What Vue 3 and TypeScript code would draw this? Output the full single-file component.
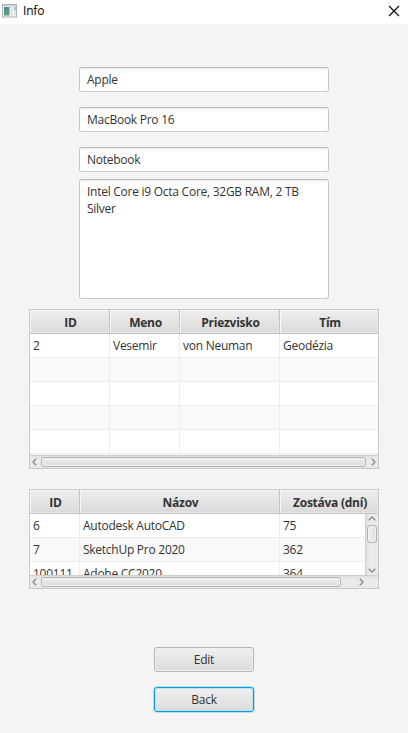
<script setup lang="ts">
const fields: string[] = ['Apple', 'MacBook Pro 16', 'Notebook']
const people: string[] = ['ID', 'Meno', 'Priezvisko', 'Tím']
const peopleRows: string[][] = [
  ['2', 'Vesemir', 'von Neuman', 'Geodézia'],
  ['', '', '', ''],
  ['', '', '', ''],
  ['', '', '', ''],
  ['', '', '', ''],
  ['', '', '', ''],
]
const software: string[] = ['ID', 'Názov', 'Zostáva (dní)']
const softwareRows: string[][] = [
  ['6', 'Autodesk AutoCAD', '75'],
  ['7', 'SketchUp Pro 2020', '362'],
  ['100111', 'Adobe CC2020', '364'],
]
</script>

<template>
  <div class="window">
    <header class="titlebar">
      <svg class="app-icon" width="16" height="14" viewBox="0 0 16 14">
        <defs>
          <linearGradient id="pane" x1="0" y1="0" x2="1" y2="1">
            <stop offset="0" stop-color="#4d829f" />
            <stop offset="1" stop-color="#58ad72" />
          </linearGradient>
        </defs>
        <rect x=".5" y=".5" width="14" height="12.5" fill="#f3f4f5" stroke="#adb1b6" />
        <rect x="1" y="1" width="13" height="1.5" fill="#cdd1d6" />
        <rect x="2" y="3" width="5.5" height="8.5" fill="url(#pane)" />
        <rect x="8.5" y="3" width="2.5" height="8.5" fill="#dfe1e3" />
        <rect x="12" y="3" width="2" height="3.5" fill="#9cc8bd" />
        <rect x="12" y="6.5" width="2" height="5" fill="#e3e8e6" />
      </svg>
      <span class="title">Info</span>
      <svg class="close" width="12" height="12" viewBox="0 0 12 12">
        <path d="M1 1L11 11M11 1L1 11" fill="none" stroke="#000" stroke-width="1.1" />
      </svg>
    </header>

    <main class="content">
      <div class="form">
        <div v-for="f in fields" :key="f" class="field">{{ f }}</div>
        <div class="area">Intel Core i9 Octa Core, 32GB RAM, 2 TB<br />Silver</div>
      </div>

      <section class="table people">
        <div class="row head">
          <div v-for="c in people" :key="c" class="th">{{ c }}</div>
        </div>
        <div class="rows">
          <div v-for="(r, i) in peopleRows" :key="i" class="row line">
            <div v-for="(v, j) in r" :key="j" class="td">{{ v }}</div>
          </div>
        </div>
        <div class="hbar">
          <svg class="arrow" width="5" height="8" viewBox="0 0 5 8"><path d="M4.2 .7L1 4L4.2 7.3" /></svg>
          <div class="thumb"></div>
          <svg class="arrow" width="5" height="8" viewBox="0 0 5 8"><path d="M.8 .7L4 4L.8 7.3" /></svg>
        </div>
      </section>

      <section class="table software">
        <div class="row head">
          <div v-for="c in software" :key="c" class="th">{{ c }}</div>
        </div>
        <div class="middle">
          <div class="rows">
            <div v-for="(r, i) in softwareRows" :key="i" class="row line">
              <div v-for="(v, j) in r" :key="j" class="td">{{ v }}</div>
            </div>
          </div>
          <div class="vbar">
            <svg class="arrow" width="8" height="5" viewBox="0 0 8 5"><path d="M.7 4.2L4 1L7.3 4.2" /></svg>
            <div class="thumb"></div>
            <svg class="arrow" width="8" height="5" viewBox="0 0 8 5"><path d="M.7 .8L4 4L7.3 .8" /></svg>
          </div>
        </div>
        <div class="hbar">
          <svg class="arrow" width="5" height="8" viewBox="0 0 5 8"><path d="M4.2 .7L1 4L4.2 7.3" /></svg>
          <div class="thumb"></div>
          <svg class="arrow" width="5" height="8" viewBox="0 0 5 8"><path d="M.8 .7L4 4L.8 7.3" /></svg>
        </div>
      </section>

      <div class="actions">
        <button class="btn">Edit</button>
        <button class="btn focused">Back</button>
      </div>
    </main>
  </div>
</template>

<style>
body {
  margin: 0;
  background: #f4f4f4;
  overflow: hidden;
}
</style>

<style scoped>
.window {
  width: 408px;
  height: 733px;
  box-sizing: border-box;
  overflow: hidden;
  background: #f4f4f4;
  color: #333;
  font: 12px/16px "Open Sans", "Noto Sans", sans-serif;
  letter-spacing: -0.26px;
}
.titlebar {
  display: flex;
  align-items: center;
  height: 24px;
  box-sizing: border-box;
  padding: 0 8px 2px 2px;
  background: #fff;
  color: #000;
}
.title {
  margin-left: 5px;
  flex: 1;
  letter-spacing: -0.2px;
}
.content {
  display: flex;
  flex-direction: column;
  align-items: center;
  padding-top: 43px;
}
.form {
  width: 250px;
}
.field,
.area {
  box-sizing: border-box;
  border: 1px solid #c8c8c8;
  border-top-color: #b5b5b5;
  border-radius: 3px;
  background: linear-gradient(#f0f0f0, #fff 4px);
  white-space: nowrap;
}
.field {
  height: 25px;
  padding: 4px 7px;
  margin-bottom: 15px;
}
.field:nth-child(3) {
  margin-bottom: 7px;
}
.area {
  height: 120px;
  padding: 3px 7px;
  line-height: 17px;
}
.table {
  width: 350px;
  box-sizing: border-box;
  border: 1px solid #c8c8c8;
  background: #fff;
  display: flex;
  flex-direction: column;
  overflow: hidden;
}
.people {
  height: 160px;
  margin-top: 10px;
}
.software {
  height: 100px;
  margin-top: 20px;
}
.row {
  display: grid;
  flex: none;
  height: 24px;
  box-sizing: border-box;
}
.people .row {
  grid-template-columns: 80px 70px 100px 99px;
}
.software .row {
  grid-template-columns: 50px 200px 99px;
}
.head {
  font-weight: 700;
}
.th {
  box-sizing: border-box;
  display: flex;
  align-items: center;
  justify-content: center;
  padding: 3px 0 0 2px;
  border-right: 1px solid #c2c2c2;
  border-bottom: 1px solid #c2c2c2;
  background: linear-gradient(#eeeeee, #dadada);
  box-shadow: inset 1px 1px #f7f7f7, inset -1px -1px #e6e6e6;
  white-space: nowrap;
}
.rows {
  flex: 1;
  min-width: 0;
  min-height: 0;
  overflow: hidden;
}
.line {
  border-bottom: 1px solid #ededed;
}
.line:nth-child(even) {
  background: #f9f9f9;
}
.td {
  box-sizing: border-box;
  padding: 4px 3px 0;
  border-right: 1px solid #ededed;
  white-space: nowrap;
}
.hbar {
  flex: none;
  height: 13px;
  box-sizing: border-box;
  display: flex;
  align-items: center;
  padding: 0 2px;
  border-top: 1px solid #cecece;
  background: linear-gradient(#dfdfdf, #ebebeb 4px, #e8e8e8);
}
.arrow {
  flex: none;
  fill: none;
  stroke: #8f8f8f;
  stroke-width: 1.4;
}
.thumb {
  box-sizing: border-box;
  border: 1px solid #b3b3b3;
  border-radius: 3px;
  background: linear-gradient(#f1f1f1, #dcdcdc);
  box-shadow: inset 0 0 0 1px #f0f0f0;
}
.hbar .thumb {
  height: 10px;
  flex: 1;
  margin: 0 5px 0 4px;
}
.software .hbar .thumb {
  flex: none;
  width: 300px;
  margin-right: 18px;
}
.middle {
  flex: 1;
  min-height: 0;
  display: flex;
}
.vbar {
  width: 13px;
  box-sizing: border-box;
  display: flex;
  flex-direction: column;
  align-items: center;
  padding: 2px 0;
  border-left: 1px solid #d0d0d0;
  background: linear-gradient(90deg, #dfdfdf, #ebebeb 4px, #e8e8e8);
}
.vbar .thumb {
  width: 10px;
  height: 18px;
  margin: 4px 0 auto;
  background: linear-gradient(90deg, #f1f1f1, #dcdcdc);
}
.actions {
  display: flex;
  flex-direction: column;
  gap: 15px;
  margin-top: 58px;
}
.btn {
  width: 100px;
  height: 25px;
  padding: 0;
  border: 1px solid #b5b5b5;
  border-radius: 3px;
  background: linear-gradient(#f0f0f0, #dbdbdb);
  box-shadow: inset 0 0 0 1px #f0f0f0;
  color: #333;
  font: inherit;
  letter-spacing: inherit;
}
.focused {
  border-color: #039ed3;
  box-shadow: inset 0 0 0 1px #c3dfe9, 0 0 0 1px #b8e1f0;
}
</style>
